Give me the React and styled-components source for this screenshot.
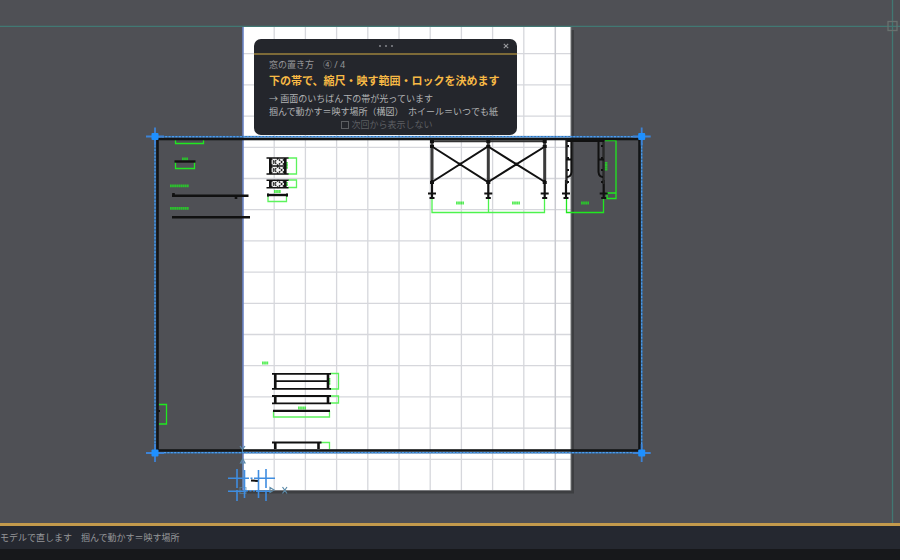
import React, { memo } from 'react';
import styled, { createGlobalStyle } from 'styled-components';

const GlobalStyle = createGlobalStyle`
  html, body, #root {
    height: 100%;
    margin: 0;
  }
  body {
    overflow: hidden;
    background: #17181b;
    font-family: "Noto Sans", "Noto Sans CJK JP", sans-serif;
  }
`;

const Page = styled.div`
  display: flex;
  flex-direction: column;
  height: 100%;
`;

const Workspace = styled.main`
  position: relative;
  flex: 1;
  min-height: 0;
  overflow: hidden;
  background: #4f5055;
`;

const Sheet = styled.svg`
  display: block;
  width: 100%;
  height: 100%;
`;

const Guide = styled.section`
  position: absolute;
  top: 39px;
  left: 254px;
  display: flex;
  flex-direction: column;
  box-sizing: border-box;
  width: 263px;
  border-radius: 7px;
  background: #24262c;
  overflow: hidden;
`;

const GuideHeader = styled.header`
  display: grid;
  grid-template-columns: 1fr auto 1fr;
  align-items: center;
  height: 14px;
  padding: 0 6px;
  border-bottom: 2px solid #7d6a38;
`;

const Grip = styled.span`
  display: flex;
  grid-column: 2;
  gap: 4px;
  i {
    width: 2px;
    height: 2px;
    border-radius: 50%;
    background: #85878c;
  }
`;

const CloseButton = styled.button`
  display: flex;
  justify-self: end;
  padding: 2px;
  border: 0;
  background: none;
  color: #999a9e;
  cursor: pointer;
`;

const GuideBody = styled.div`
  padding: 3px 12px 3px 15px;
  white-space: nowrap;
`;

const Step = styled.p`
  margin: 0;
  color: #96979a;
  font-size: 9px;
  line-height: 14px;
`;

const Title = styled.h2`
  margin: 0 0 2px;
  color: #f7b945;
  font-size: 11px;
  font-weight: 700;
  line-height: 18px;
`;

const Line = styled.p`
  margin: 0;
  color: #b1b2b4;
  font-size: 9px;
  line-height: 13px;
`;

const Dismiss = styled.label`
  display: flex;
  align-items: center;
  justify-content: center;
  gap: 2px;
  color: #5c5e62;
  font-size: 9px;
  line-height: 14px;
  input {
    appearance: none;
    box-sizing: border-box;
    width: 8px;
    height: 8px;
    margin: 0;
    border: 1px solid #5c5e62;
  }
`;

const StatusBar = styled.footer`
  height: 23px;
  border-top: 3px solid #c39a4c;
  background: #252830;
  color: #96979a;
  font-size: 9px;
  line-height: 23px;
  white-space: nowrap;
`;

const BottomStrip = styled.div`
  height: 11px;
  background: #17181b;
`;

const PITCH = 31.2;
const PAPER = { left: 243, top: 27, right: 571, bottom: 490.5 };

const columns = Array.from({ length: 9 }, (_, i) => PAPER.left + PITCH * (i + 1));
const rows = Array.from({ length: 14 }, (_, i) => PAPER.bottom - PITCH * (i + 1));

const Paper = () => (
  <g>
    <rect x="246" y="30" width="328" height="463.5" fill="#3d3e41" />
    <rect x="243" y="27" width="328" height="463.5" fill="#fff" />
    <g stroke="#d6d7dc" strokeWidth="1.3">
      {columns.map((x) => <path key={x} d={`M${x} ${PAPER.top}V${PAPER.bottom}`} />)}
      {rows.map((y) => <path key={y} d={`M${PAPER.left} ${y}H${PAPER.right}`} />)}
    </g>
    <path d="M555.3 27V490" stroke="#c9cad0" strokeWidth="1.5" />
    <path d="M243 490.5H571V27" fill="none" stroke="#77787b" />
    <path d="M243 27V490" stroke="#6a83c4" strokeWidth="1.6" />
  </g>
);

const Dimensions = () => (
  <g fill="none" stroke="#20e820" strokeWidth="1.3">
    <path d="M175.5 140V143.5H203.5V140" />
    <path d="M175.5 162V168.5H194.5V162" />
    <path d="M288 158H296.5V174H288M288 180H296.5V187.5H288" stroke="#5cf35c" />
    <path d="M268 194V201.5H286.5V194" stroke="#5cf35c" />
    <path d="M432 198V212.5H544.5V198M488.5 198V212.5" stroke="#4df34d" />
    <path d="M566.5 198V212.5H603.5V198" />
    <path d="M605 140.5H616V198.5H607V193H616" />
    <path d="M330 373.5H338.5V389H330M330 396H338.5V403H330" stroke="#5cf35c" />
    <path d="M273.5 411V417H329.5V411M320 442.5H329.5V449" stroke="#5cf35c" />
    <path d="M159 404.5H166.5V424H159" />
    <g strokeWidth="2.8" strokeDasharray="1.8 .3" opacity=".75">
      <path d="M170 185.8H189M170 208.4H189M182 159H188" />
      <path d="M274 191.5H281M456 203H464M512 203H520M581 203H589" />
      <path d="M262 363H268.5M298 408H306M606 162V171M329 378V385M286.5 162V169M286.5 182V186" />
    </g>
  </g>
);

const Foot = ({ x }) => (
  <path d={`M${x} 180V198M${x - 4} 193.5H${x + 4}M${x - 2.5} 198H${x + 2.5}`} strokeWidth="2.2" />
);

const Scaffold = () => (
  <g fill="none" stroke="#111">
    <path d="M432 139V184M488.3 139V184M544.7 139V184" stroke="#3b3b3b" strokeWidth="3" />
    <path d="M432 141.3H545" stroke="#333" strokeWidth="2" />
    <path d="M432 146.5L488 182L545 146.5M432 182L488 146.5L545 182" strokeWidth="2" />
    {[432, 488.3, 544.7, 566, 603.7].map((x) => <Foot key={x} x={x} />)}
    <g fill="#111" stroke="none">
      {[432, 488.3, 544.7].map((x) => (
        <path key={x} d={`M${x - 2} 139h4v4h-4zM${x - 2} 145h4v3h-4zM${x - 2} 181h4v3h-4z`} />
      ))}
      <circle cx="460" cy="164.3" r="1.8" />
      <circle cx="516.3" cy="164.3" r="1.8" />
    </g>
    <path d="M566.5 139V184M603.5 139V184" stroke="#282828" strokeWidth="2.4" />
    <path d="M571.5 139V172Q571 177 567 177M598.5 139V172Q599 177 603 177M566 159.5H571M599 159.5H604" strokeWidth="2" />
    <path d="M567 140.8H604" strokeWidth="2.4" />
    <path d="M568 145V184M602 145V184" strokeWidth="2" strokeDasharray="2 10" />
  </g>
);

const Lattice = ({ y }) => (
  <g>
    <rect x="271" y={y} width="14" height="7" fill="#f4f4f4" stroke="none" />
    <path
      d={`M271 ${y}L278 ${y + 7}L285 ${y}M271 ${y + 7}L278 ${y}L285 ${y + 7}`}
      stroke="#222"
      strokeWidth="1.5"
      strokeDasharray="1.8 1"
    />
  </g>
);

const Parts = () => (
  <g fill="none" stroke="#111">
    <path d="M174.5 161.5H195.5" strokeWidth="2.4" />
    <path d="M172 195.8H248.5M172 217.3H250" strokeWidth="2.4" />
    <path d="M173.5 193V196M236 196V199" strokeWidth="2.6" />
    <Lattice y={158.5} />
    <Lattice y={166.5} />
    <Lattice y={180.5} />
    <path d="M270.3 158V174M285.3 158V174M270.3 180V188M285.3 180V188" strokeWidth="2.6" />
    <path d="M266.5 158H288.5M266.5 174H288.5M266.5 180.2H288.5M266.5 187.8H288.5M270 166H286" strokeWidth="1.6" />
    <path d="M267 195H288" strokeWidth="2.4" />
    <path d="M268 193.5V196.5M287 193.5V196.5" strokeWidth="2" />
    <path d="M275.3 374V389M328 374V389M275.3 396V403M328 396V403M275.3 443V449M318.5 443V449" strokeWidth="2.6" />
    <path d="M272 373.8H331M272 388.8H331M275 381.2H328M272 396H331M272 403.3H331M272 442.5H321.5" strokeWidth="1.8" />
    <path d="M273 410.8H330" strokeWidth="2.2" />
    <path d="M158 411H160M251 480.5L258 481" strokeWidth="2" />
  </g>
);

const Handle = ({ x, y }) => (
  <g>
    <path d={`M${x - 9} ${y}H${x + 9}M${x} ${y - 9}V${y + 9}`} stroke="#3d83d6" strokeWidth="1.8" />
    <rect x={x - 3.5} y={y - 3.5} width="7" height="7" rx="1" fill="#1e90ff" />
  </g>
);

const Viewport = () => (
  <g fill="none">
    <rect x="157.5" y="139" width="482" height="311.5" stroke="#121416" strokeWidth="2.6" />
    <rect x="155" y="136.7" width="486.7" height="316" stroke="#356da3" strokeWidth="1.6" />
    <rect x="155" y="136.7" width="486.7" height="316" stroke="#4b9cf0" strokeWidth="1.2" strokeDasharray="2 1.4" />
    <Handle x={155} y={136.5} />
    <Handle x={641.7} y={136.5} />
    <Handle x={155} y={453} />
    <Handle x={641.7} y={453} />
  </g>
);

const Origin = () => (
  <g fill="none" stroke="#5b8aa8" strokeWidth="1.2">
    <path d="M240 446L242.5 449.5L245 446M242.5 449.5V452M240.5 463L242.8 459L245 463Z" />
    <path d="M240 487.5H246V493.5H240ZM243 463V487" opacity=".6" />
    <path d="M270 487.5L274 490L270 492.5ZM282.5 487L287 493.5M287 487L282.5 493.5" />
    <g stroke="#3f8de0" strokeWidth="1.6">
      <path d="M228 478.2H247M256 478.2H275M228 491.3H246M256 491.3H270M237 469V488M266 469V488M244.5 470V498M258.5 470V498M237 490V501M266 490V501" />
      <path d="M247 478.2H257M246 490.8H258" strokeDasharray="2 1.5" />
    </g>
  </g>
);

const Crosshair = () => (
  <g fill="none">
    <path d="M0 26.3H900M892.5 0V524" stroke="#417873" strokeWidth="1.3" />
    <rect x="888" y="21.5" width="9" height="9" stroke="#69716f" strokeWidth="1.3" />
  </g>
);

const GuidePanel = () => (
  <Guide aria-labelledby="guide-title">
    <GuideHeader>
      <Grip><i /><i /><i /></Grip>
      <CloseButton type="button" aria-label="閉じる">
        <svg width="6" height="6" viewBox="0 0 6 6" stroke="currentColor" strokeWidth="1.1">
          <path d="M.8 .8L5.2 5.2M5.2 .8L.8 5.2" />
        </svg>
      </CloseButton>
    </GuideHeader>
    <GuideBody>
      <Step>窓の置き方　④ / 4</Step>
      <Title id="guide-title">下の帯で、縮尺・映す範囲・ロックを決めます</Title>
      <Line>→ 画面のいちばん下の帯が光っています</Line>
      <Line>掴んで動かす＝映す場所（構図）　ホイール＝いつでも紙</Line>
      <Dismiss htmlFor="guide-dismiss">
        <input id="guide-dismiss" type="checkbox" />
        次回から表示しない
      </Dismiss>
    </GuideBody>
  </Guide>
);

export default memo(() => (
  <Page lang="ja">
    <GlobalStyle />
    <Workspace>
      <Sheet viewBox="0 0 900 523" preserveAspectRatio="xMinYMin slice">
        <Paper />
        <Crosshair />
        <Dimensions />
        <Scaffold />
        <Parts />
        <Viewport />
        <Origin />
      </Sheet>
      <GuidePanel />
    </Workspace>
    <StatusBar>モデルで直します　掴んで動かす＝映す場所</StatusBar>
    <BottomStrip />
  </Page>
));
